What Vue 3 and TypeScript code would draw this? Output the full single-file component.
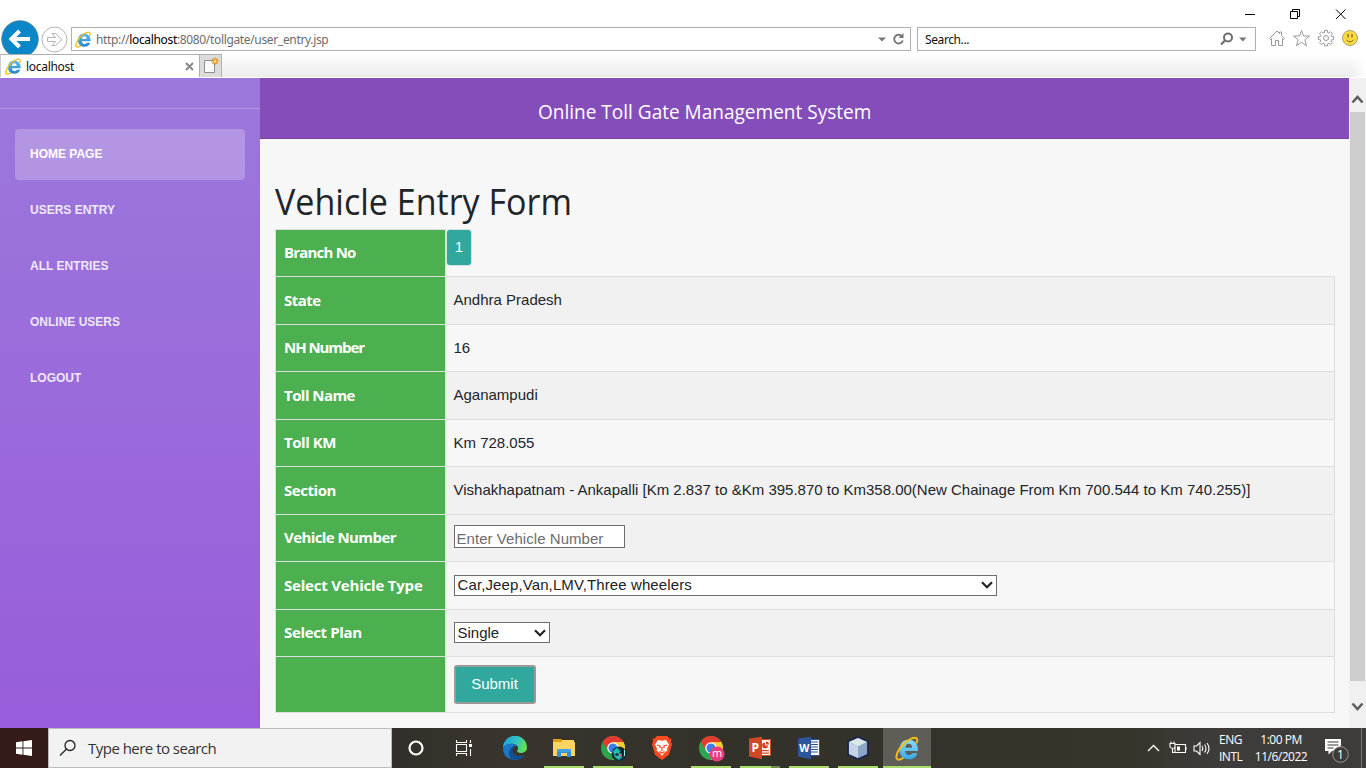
<script setup lang="ts">
interface MenuItem { label: string; active?: boolean }
interface Row { label: string; tracking: number; kind: 'badge' | 'text' | 'input' | 'type' | 'plan' | 'submit'; value: string; cls: string }

const menu: MenuItem[] = [
  { label: 'Home Page', active: true },
  { label: 'Users Entry' },
  { label: 'All Entries' },
  { label: 'Online Users' },
  { label: 'Logout' },
]

const rows: Row[] = [
  { label: 'Branch No', tracking: -0.8, kind: 'badge', value: '1', cls: 'first' },
  { label: 'State', tracking: -0.55, kind: 'text', value: 'Andhra Pradesh', cls: 'tall dark' },
  { label: 'NH Number', tracking: -1.05, kind: 'text', value: '16', cls: '' },
  { label: 'Toll Name', tracking: -0.55, kind: 'text', value: 'Aganampudi', cls: 'tall dark' },
  { label: 'Toll KM', tracking: -0.45, kind: 'text', value: 'Km 728.055', cls: '' },
  { label: 'Section', tracking: -0.45, kind: 'text', value: 'Vishakhapatnam - Ankapalli [Km 2.837 to &Km 395.870 to Km358.00(New Chainage From Km 700.544 to Km 740.255)]', cls: 'tall dark' },
  { label: 'Vehicle Number', tracking: -0.58, kind: 'input', value: 'Enter Vehicle Number', cls: 'dark' },
  { label: 'Select Vehicle Type', tracking: -0.2, kind: 'type', value: 'Car,Jeep,Van,LMV,Three wheelers', cls: 'tall' },
  { label: 'Select Plan', tracking: -0.35, kind: 'plan', value: 'Single', cls: 'dark' },
  { label: '', tracking: 0, kind: 'submit', value: 'Submit', cls: 'last' },
]

const apps = ['edge', 'folder', 'chrome', 'brave', 'chrome-m', 'ppt', 'word', 'cube', 'ie']
</script>

<template>
  <div class="screen">
    <svg class="defs" width="0" height="0">
      <defs>
        <linearGradient id="ieBlue" x1="0" y1="0" x2="0" y2="1"><stop offset="0" stop-color="#8fe0fb" /><stop offset="1" stop-color="#35a9e6" /></linearGradient>
        <linearGradient id="ieBlueDeep" x1="0" y1="0" x2="0" y2="1"><stop offset="0" stop-color="#5cbdec" /><stop offset="1" stop-color="#2a86c8" /></linearGradient>
        <linearGradient id="edgeTop" x1="0" y1="0" x2="1" y2="0.3"><stop offset="0" stop-color="#1b9de2" /><stop offset=".6" stop-color="#2fc3c4" /><stop offset="1" stop-color="#62dc58" /></linearGradient>
        <symbol id="ie" viewBox="0 0 24 24">
          <path d="M12.800 3.500C18.500 3.500 22 7.500 22 13V14.500H9.800C10 17 11.300 18.300 13.300 18.300C14.800 18.300 15.800 17.700 16.400 16.500H21.600C20.500 20.200 17.500 22.300 13.200 22.300C7.700 22.300 4.300 18.500 4.300 13C4.300 7.500 7.700 3.500 12.800 3.500ZM9.900 11.200H16.500C16.300 8.900 15.100 7.500 13.200 7.500C11.300 7.500 10.100 8.900 9.900 11.200Z" fill-rule="evenodd" />
          <path d="M7.500 21.300C3.500 23.800 .8 23.200 1.400 19.200C2.300 13.500 9 5.500 15.500 2.500C20 .5 22.500 2 20.800 6.300" fill="none" stroke="#efbd1c" stroke-width="1.900" stroke-linecap="round" />
        </symbol>
        <symbol id="chrome" viewBox="0 0 24 24">
          <circle cx="12" cy="12" r="12" fill="#2da44e" />
          <path d="M1.600 6A12 12 0 0 1 22.400 6L12 7L7.500 14.500Z" fill="#e33b2e" />
          <path d="M22.400 6A12 12 0 0 1 12 24L17 14.500L12 6Z" fill="#fcc934" />
          <circle cx="12" cy="12" r="5.800" fill="#fff" />
          <circle cx="12" cy="12" r="4.500" fill="#3b7ded" />
        </symbol>
      </defs>
    </svg>

    <header class="chrome">
      <div class="captions">
        <svg width="110" height="28" viewBox="0 0 110 28" fill="none" stroke="#000" stroke-width="1">
          <path d="M1 14.500h10M46.500 11.500h7v7h-7zM48.500 11v-1.500h7v7H54M92 9.500l9.500 9.500M101.500 9.500L92 19" />
        </svg>
      </div>
      <div class="nav">
        <svg class="back" width="38" height="38" viewBox="0 0 38 38">
          <circle cx="19" cy="19" r="18.300" fill="#0a87c8" stroke="#56788c" stroke-width=".8" />
          <path d="M29 19H12M18.500 11l-8 8l8 8" fill="none" stroke="#fff" stroke-width="4" />
        </svg>
        <svg class="fwd" width="27" height="27" viewBox="0 0 27 27" fill="#fff" stroke="#b4b4b4">
          <circle cx="13.500" cy="13.500" r="12.500" />
          <path d="M6.500 11.500h8l-3.500-4h3.500l6.500 6l-6.500 6h-3.500l3.500-4h-8z" />
        </svg>
        <div class="address">
          <svg class="e-small" width="17" height="17"><use href="#ie" /></svg>
          <span class="url">http://<b>localhost</b>:8080/tollgate/user_entry.jsp</span>
          <svg class="addr-tools" width="30" height="16" viewBox="0 0 30 16">
            <path d="M1 6.500h8l-4 4z" fill="#777" />
            <path d="M25 5.300A4.400 4.400 0 1 0 25.800 9.500" fill="none" stroke="#777" stroke-width="1.900" />
            <path d="M26.500 2v5h-5z" fill="#777" />
          </svg>
        </div>
        <div class="search">
          <span>Search...</span>
          <svg width="30" height="16" viewBox="0 0 30 16">
            <circle cx="9" cy="6.500" r="4" fill="none" stroke="#6d6d6d" stroke-width="2" />
            <path d="M6 9.500L2 13.500" stroke="#6d6d6d" stroke-width="2.200" />
            <path d="M20 6.500h7.500l-3.700 4z" fill="#777" />
          </svg>
        </div>
        <svg class="tools" width="92" height="20" viewBox="0 0 92 20" fill="none" stroke="#999" stroke-width="1">
          <path d="M1.500 10.500L9 3l2.500 2.500V4h2v3.500l3 3l-1 1l-1-1V17.500h-4v-5H7.500v5h-4V10.500l-1 1z" />
          <path d="M33.500 2.500l2 5.500h6l-4.700 3.800l1.800 6l-5.100-3.500l-5.100 3.500l1.800-6L25.500 8h6z" />
          <path d="M56.500 2.500h3v2l1.500.6l1.500-1.400l2 2l-1.400 1.500l.6 1.500h2v3h-2l-.6 1.500l1.400 1.500l-2 2l-1.500-1.400l-1.500.6v2h-3v-2l-1.500-.6l-1.500 1.400l-2-2l1.400-1.500l-.6-1.500h-2v-3h2l.6-1.500l-1.400-1.500l2-2l1.500 1.400l1.500-.6z" />
          <circle cx="58" cy="10" r="2.500" />
          <circle cx="82" cy="10" r="7.500" fill="#fbd93f" stroke="#a9a17b" />
          <path d="M80 6v3.500M84 6v3.500" stroke="#8a7a2e" stroke-width="1.500" /><path d="M78.500 12q3.500 3.500 7 0" stroke="#7a6c28" />
        </svg>
      </div>
      <div class="tabs">
        <div class="tab">
          <svg class="e-small" width="17" height="17"><use href="#ie" /></svg>
          <span>localhost</span>
          <svg class="close" width="9" height="9" viewBox="0 0 9 9"><path d="M1 1l7 7M8 1L1 8" stroke="#888" stroke-width="2" /></svg>
        </div>
        <div class="newtab">
          <svg width="16" height="18" viewBox="0 0 16 18">
            <path d="M1.500 3.500h10v12h-10z" fill="#fafafa" stroke="#909090" />
            <path d="M12 .5v7.500M8.200 4.200h7.500M9.500 1.700l5 5M14.500 1.700l-5 5" stroke="#e58a17" stroke-width="1.300" /><circle cx="12" cy="4.200" r="1.600" fill="#ffe27a" />
          </svg>
        </div>
      </div>
    </header>

    <div class="page">
      <aside class="sidebar">
        <div class="logo"></div>
        <nav>
          <a v-for="m in menu" :key="m.label" :class="{ active: m.active }">{{ m.label }}</a>
        </nav>
      </aside>
      <main class="main">
        <div class="banner"><span>Online Toll Gate Management System</span></div>
        <section class="content">
          <h1><span>Vehicle Entry Form</span></h1>
          <div class="table">
            <div v-for="r in rows" :key="r.label" class="row" :class="r.cls">
              <div class="th" :style="{ letterSpacing: r.tracking + 'px' }">{{ r.label }}</div>
              <div class="td" :class="r.kind">
                <span v-if="r.kind === 'badge'" class="pill">{{ r.value }}</span>
                <span v-else-if="r.kind === 'text'">{{ r.value }}</span>
                <div v-else-if="r.kind === 'input'" class="field">{{ r.value }}</div>
                <button v-else-if="r.kind === 'submit'">{{ r.value }}</button>
                <div v-else class="select">
                  <span>{{ r.value }}</span>
                  <svg width="14" height="10" viewBox="0 0 14 10"><path d="M2 2.200l5 5l5-5" fill="none" stroke="#222" stroke-width="2.200" /></svg>
                </div>
              </div>
            </div>
          </div>
        </section>
      </main>
      <div class="scroll">
        <svg width="17" height="34" viewBox="0 0 17 34"><path d="M3.500 24.500l5-5.500l5 5.500" fill="none" stroke="#5f5f5f" stroke-width="2.600" /></svg>
        <div class="thumb"></div>
        <svg width="17" height="47" viewBox="0 0 17 47"><path d="M3.500 22.500l5 5.500l5-5.500" fill="none" stroke="#5f5f5f" stroke-width="2.600" /></svg>
      </div>
    </div>

    <footer class="taskbar">
      <div class="start">
        <svg width="16" height="16" viewBox="0 0 16 16" fill="#fff"><path d="M0 2.200l6.500-.9v6.200H0zM7.400 1.200L16 0v7.500H7.400zM0 8.400h6.500v6.300L0 13.800zM7.400 8.400H16V16l-8.600-1.200z" /></svg>
      </div>
      <div class="tsearch">
        <svg width="18" height="18" viewBox="0 0 18 18" fill="none" stroke="#222" stroke-width="1.300"><circle cx="11" cy="6.500" r="5" /><path d="M7.500 10L1 16.500" /></svg>
        <span>Type here to search</span>
      </div>
      <div class="tcell"><svg width="18" height="18" viewBox="0 0 18 18"><circle cx="9" cy="9" r="6.500" fill="none" stroke="#fff" stroke-width="2.200" /></svg></div>
      <div class="tcell">
        <svg width="18" height="16" viewBox="0 0 18 16" fill="none" stroke="#fff" stroke-width="1.100"><path d="M1.500 0v2.500h10V0M1.500 4.500h10v7h-10zM1.500 16v-2.500h10V16M15.500 0v3M15.500 9v7" /><path d="M14 4h3v3h-3z" fill="#fff" stroke="none" /></svg>
      </div>
      <div class="apps">
        <div v-for="a in apps" :key="a" class="app" :class="a">
          <svg v-if="a === 'edge'" width="24" height="24" viewBox="0 0 24 24">
            <path d="M0 12A12 12 0 0 1 24 11.500C24.500 16 18 18.500 14.500 16C13 15 15.500 14 15 11.500C14 7 4 6 0 12Z" fill="url(#edgeTop)" />
            <path d="M0 12C3 6.500 12 6.500 15 10.500C12 9 9 11.500 9 14.500C9 19 15 22.500 21 20C16 26 0 26 0 12Z" fill="#1877c9" />
            <path d="M7.500 22.500C4 17 7 10.500 12.500 9.800C9.500 11 8.500 15 11 18C14 21 18.500 20.500 22 18.500C20 22.500 13.500 26 7.500 22.500Z" fill="#124f91" />
          </svg>
          <svg v-else-if="a === 'folder'" width="24" height="24" viewBox="0 0 24 24">
            <path d="M1 3h8l2 2h11v5H1z" fill="#dfa21a" /><path d="M10 4h12v3H10zM1 6h22v14H1z" fill="#fcd462" />
            <path d="M5 21v-8h14v8h-4v-4H9v4z" fill="#2f8fd8" /><path d="M5 13h14v3H5z" fill="#3fa2e6" />
          </svg>
          <svg v-else-if="a === 'chrome'" class="shift" width="26" height="26" viewBox="0 0 26 26">
            <use href="#chrome" width="24" height="24" />
            <circle cx="18" cy="18" r="7.500" fill="#12323a" /><path d="M11 16l5-4.500l3.500 3.500l-3.500 3.500zM14 21.500l6-4.500l3 3l-5 4z" fill="#18b8b0" /><circle cx="16" cy="18.500" r="2.500" fill="#16485a" stroke="#42e0ce" /><path d="M21.500 12.500v9" stroke="#081418" stroke-width="1.500" /><path d="M19 19l2 1.500" stroke="#e3545c" stroke-width="1.500" /><path d="M23.500 14v6" stroke="#9ff0e0" />
          </svg>
          <svg v-else-if="a === 'brave'" width="22" height="24" viewBox="0 0 22 24">
            <path d="M6 0h10l2.500 2.500l2 .3l-.5 3l1 2.500l-3 10.500L11 24l-7-5.200L1 8.300l1-2.500l-.5-3l2-.3z" fill="#fb4a22" />
            <path d="M7 4l4 .8L15 4l3 4.500l-2 4l.5 2l-3.500 2.500l-2 3l-2-3L5.500 14.500l.5-2l-2-4z" fill="#fff" /><path d="M6 9l3 1v2M16 9l-3 1v2M11 11v4M8.500 15.500L11 17l2.500-1.500" fill="none" stroke="#fb4a22" stroke-width="1.300" />
          </svg>
          <svg v-else-if="a === 'chrome-m'" class="shift" width="26" height="26" viewBox="0 0 26 26">
            <use href="#chrome" width="24" height="24" /><circle cx="18" cy="18" r="7.600" fill="#e73c7e" /><text x="18" y="21.300" text-anchor="middle" font-size="11" fill="#fff">m</text>
          </svg>
          <svg v-else-if="a === 'ppt'" width="24" height="24" viewBox="0 0 24 24">
            <path d="M12 3.500h10.500v16H12z" fill="#fff" stroke="#d24726" /><path d="M1 2.500L14 .8v22.400L1 20.500z" fill="#d24726" /><text x="3.500" y="15.800" font-size="12" font-weight="700" fill="#fff">P</text>
            <path d="M17 6.500a3 3 0 1 0 3 3h-3z" fill="#d24726" /><path d="M18 5.500a3 3 0 0 1 3 3h-3zM14 14h7v1.300h-7zM14 16.500h7v1.300h-7z" fill="#d24726" />
          </svg>
          <svg v-else-if="a === 'word'" width="24" height="24" viewBox="0 0 24 24">
            <path d="M12 3.500h10.500v16H12z" fill="#fff" stroke="#2b579a" /><path d="M1 2.500L14 .8v22.400L1 20.500z" fill="#2b579a" /><text x="2.300" y="15.500" font-size="10.500" font-weight="700" fill="#fff">W</text>
            <path d="M14 6h7M14 8.500h7M14 11h7M14 13.500h7M14 16h7" stroke="#2b579a" />
          </svg>
          <svg v-else-if="a === 'cube'" width="24" height="24" viewBox="0 0 24 24">
            <path d="M12 1l10 4.500v13L12 23L2 18.500v-13z" fill="#8797a8" stroke="#1b2356" stroke-width="1.800" /><path d="M12 2l9 4l-9 4.500L3 6z" fill="#d9e8e6" /><path d="M3 6l9 4.500V22L3 18z" fill="#c3d4ea" /><path d="M12 10.500L21 6v12l-9 4z" fill="#8ea6c6" />
          </svg>
          <svg v-else class="e-big" width="25" height="25"><use href="#ie" /></svg>
        </div>
      </div>
      <div class="tray">
        <svg width="64" height="18" viewBox="0 0 64 18" fill="none" stroke="#fff" stroke-width="1.100">
          <path d="M1 12l5.500-5.500L12 12" stroke-width="1.400" />
          <path d="M28 5.500h10.500v8H28zM39 8v3M23 4.500h5v3.500q-2.500 3-5 0zM24 4.500V2.500M27 4.500V2.500M25.500 9.500v4H28" /><path d="M30 7.500h3v4h-3z" fill="#fff" stroke="none" />
          <path d="M47 7h2.500l3.500-3.500v12L49.500 12H47zM55 7q1.500 2.500 0 5M57.500 5.500q3 4 0 8M60 4q4 5.500 0 11" />
        </svg>
        <div class="lang"><span>ENG</span><span>INTL</span></div>
        <div class="clock"><span>1:00 PM</span><span>11/6/2022</span></div>
        <svg class="note" width="26" height="28" viewBox="0 0 26 28">
          <path d="M1 2h16v12H8l-3.500 3.500V14H1z" fill="#fff" /><path d="M3.500 5h11M3.500 8h11M3.500 11h6" stroke="#3b3a38" stroke-width="1.100" />
          <circle cx="16.500" cy="17.500" r="7.800" fill="#3d3c3b" stroke="#999" /><text x="16.500" y="22" text-anchor="middle" font-size="12" fill="#fff">1</text>
        </svg>
        <i></i>
      </div>
    </footer>
  </div>
</template>

<style>
html, body { margin: 0; overflow: hidden; }
</style>

<style scoped>
.screen { width: 1366px; height: 768px; display: flex; flex-direction: column; overflow: hidden; background: #fff; font-family: "Open Sans", "Noto Sans", sans-serif; color: #212529; }
.screen * { box-sizing: border-box; }
svg { display: block; flex: none; }
span { white-space: nowrap; }
.defs { height: 0; }
.e-small { fill: url(#ieBlueDeep); }
.e-big { fill: url(#ieBlue); }

.chrome { height: 78px; flex: none; font-family: "Noto Sans", sans-serif; font-size: 12px; }
.captions { height: 27px; display: flex; justify-content: flex-end; padding-right: 12px; }
.nav { height: 27px; display: flex; align-items: flex-start; padding-left: 1px; }
.back { margin: -7px 1px 0 0; }
.fwd { margin: -1px 0 0 1px; }
.address { margin-left: 3px; width: 840px; height: 24px; border: 1px solid #b0b0b0; display: flex; align-items: center; padding: 0 3px; }
.url { margin-left: 4px; color: #6d6d6d; letter-spacing: -.34px; }
.url b { font-weight: 400; color: #000; }
.addr-tools { margin-left: auto; }
.search { margin-left: 6px; width: 339px; height: 24px; border: 1px solid #b0b0b0; display: flex; align-items: center; justify-content: space-between; padding: 0 6px 0 7px; color: #111; letter-spacing: -.4px; }
.tools { margin: 1px 0 0 12px; }
.tabs { position: relative; height: 23px; display: flex; background: linear-gradient(270deg, #fff, rgba(255, 255, 255, 0) 14px), linear-gradient(#fff, #ececec); }
.tab { width: 200px; background: #fff; border: 1px solid #b0b0b0; border-left-color: #ccc; border-bottom: 0; display: flex; align-items: center; padding: 0 5px 0 4px; color: #111; }
.tab span { margin-left: 4px; letter-spacing: -.3px; }
.close { margin-left: auto; }
.newtab { width: 22px; background: #dcdcdc; border: 1px solid #b0b0b0; border-left: 0; border-bottom: 0; padding: 2px 0 0 3px; }

.page { height: 650px; flex: none; display: flex; }
.sidebar { width: 260px; background: linear-gradient(#9c78dc, #985dda); }
.logo { height: 31px; border-bottom: 1px solid rgba(255, 255, 255, .22); }
nav { padding: 20px 15px 0; display: flex; flex-direction: column; gap: 5px; }
nav a { height: 51px; border-radius: 4px; padding: 0 15px; font: 700 12px/50px "Liberation Sans", Arial, sans-serif; text-transform: uppercase; color: rgba(255, 255, 255, .86); }
nav a.active { background: rgba(255, 255, 255, .23); color: #fff; }
.main { width: 1089px; background: #f7f7f7; }
.banner { height: 61px; background: #844dba; border-bottom: 1px solid #7541a5; color: #fff; font-size: 20px; line-height: 67px; padding-left: 278px; }
.banner span { display: inline-block; transform: scaleX(.951); transform-origin: 0 50%; }
.content { padding: 33px 15px 0; }
h1 { margin: 0; height: 57px; font-size: 37px; font-weight: 400; line-height: 57px; }
h1 span { display: inline-block; transform: scaleX(.92); transform-origin: 0 50%; }
.table { width: 1060px; font: 15px/22px "Liberation Sans", Arial, sans-serif; }
.row { display: flex; height: 47px; }
.row.tall { height: 48px; }
.row.last { height: 56px; }
.row.first { height: 48px; }
.th { width: 171px; background: #4caf50; color: #fff; border: 1px solid #dcdee0; border-top: 0; padding: 0 0 2px 8px; display: flex; align-items: center; font: 700 15px/22px "Open Sans", sans-serif; }
.first .th { border-top: 1px solid #dcdee0; }
.td { flex: 1; border: 1px solid #dcdee0; border-top: 0; border-left: 0; padding-left: 7.500px; display: flex; align-items: center; padding-bottom: 1px; }
.first .td { border-right: 0; padding: 1px 0 0 1px; align-items: flex-start; }
.dark .td { background: #f1f1f1; }
.pill { width: 24px; height: 35px; border-radius: 3px; background: #31a89e; color: #fff; text-align: center; line-height: 34px; box-shadow: 0 0 0 1px #d3e2e2; }
.field { width: 171px; height: 23px; border: 1px solid #6d6d6d; background: #fff; color: #6d6d6d; padding: 1px 2px 0; line-height: 23px; white-space: nowrap; margin-bottom: 2px; letter-spacing: .05px; }
.select { width: 543px; height: 21px; border: 1px solid #6d6d6d; background: #fff; display: flex; align-items: center; justify-content: space-between; padding: 0 2px 0 3px; color: #222; }
.type .select { letter-spacing: .11px; }
.plan .select { width: 96px; }
button { width: 82px; height: 39px; border: 2px solid #999; border-radius: 3px; background: #31a89e; color: #fff; font: 15px "Liberation Sans", Arial, sans-serif; padding: 0 0 2px; }
.scroll { width: 17px; background: #f0f0f0; }
.thumb { height: 569px; margin: 0 1px; background: #cdcdcd; }

.taskbar { height: 40px; flex: none; display: flex; background: linear-gradient(90deg, #351a1a 0, #351a1a 48px, #322e29 390px, #39352e 500px, #32312a 720px, #36352b 1130px, #3d3c3b 1220px, #3d3c3b); color: #fff; }
.start { width: 48px; display: flex; align-items: center; justify-content: center; }
.tsearch { width: 344px; background: #f2f2f2; border: 1px solid #bcbcbc; display: flex; align-items: center; padding-left: 10px; color: #333; font-size: 15px; }
.tsearch span { margin-left: 11px; letter-spacing: -.52px; }
.tcell { width: 48px; display: flex; align-items: center; justify-content: center; }
.apps { display: flex; gap: 1px; margin-left: 3px; }
.app { width: 48px; height: 40px; display: flex; align-items: center; justify-content: center; background: linear-gradient(#a7dc6b, #a7dc6b) center bottom / 40px 2px no-repeat; }
.shift { margin: 1px 0 0 2px; }
.edge, .brave { background: none; }
.ppt { background: linear-gradient(90deg, #a7dc6b 31px, #6f8f4b 31px) center bottom / 40px 2px no-repeat; }
.ie { background: linear-gradient(#a7dc6b, #a7dc6b) center bottom / 48px 2px no-repeat, #5e5d58; }
.tray { margin-left: auto; display: flex; align-items: center; font-size: 12px; line-height: 17px; }
.lang, .clock { display: flex; flex-direction: column; letter-spacing: -.5px; padding-bottom: 1px; }
.lang { margin-left: 8px; width: 25px; }
.clock { width: 66px; margin-left: 4px; align-items: center; }
.note { margin: 6px 0 0 10px; }
.tray i { width: 1px; height: 40px; background: #777; margin: 0 4px 0 11px; }
</style>
